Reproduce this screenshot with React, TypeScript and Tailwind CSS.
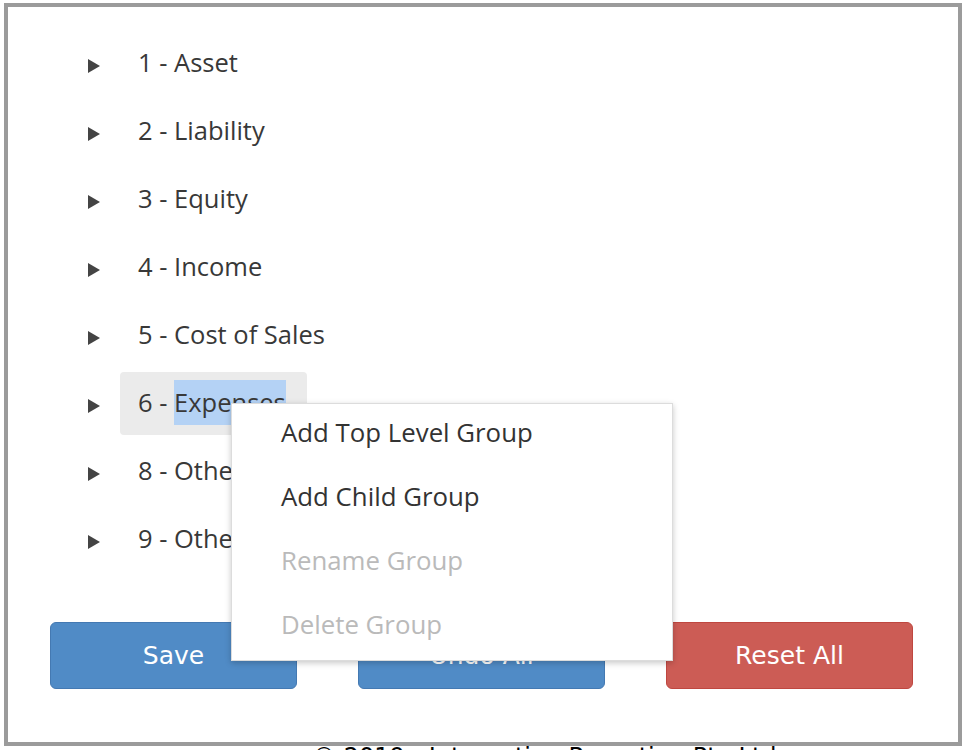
import React from 'react';

const groups = [
  { id: 1, label: '1 - Asset' },
  { id: 2, label: '2 - Liability' },
  { id: 3, label: '3 - Equity' },
  { id: 4, label: '4 - Income' },
  { id: 5, label: '5 - Cost of Sales' },
  { id: 6, label: '6 - Expenses', selected: true },
  { id: 8, label: '8 - Other Income' },
  { id: 9, label: '9 - Other Expenses' },
];

const menuItems = [
  { label: 'Add Top Level Group', disabled: false },
  { label: 'Add Child Group', disabled: false },
  { label: 'Rename Group', disabled: true },
  { label: 'Delete Group', disabled: true },
];

function Caret() {
  return (
    <svg width="12" height="14" viewBox="0 0 12 14" className="block">
      <polygon points="0,0 12,7 0,14" fill="#444444" />
    </svg>
  );
}

function TreeRow({ label, selected }: { label: string; selected?: boolean }) {
  const [num, name] = label.split(' - ');
  return (
    <li className="flex items-start h-[63px] mb-[5px]">
      <div className="ml-[80px] mt-[27px] w-[12px]">
        <Caret />
      </div>
      <div
        className={
          selected
            ? 'ml-[20px] pl-[18px] pr-[21px] pt-[8px] pb-[10px] leading-[45px] rounded-[4px] bg-[#ebebeb]'
            : 'ml-[20px] pl-[18px] pr-[21px] pt-[8px] pb-[10px] leading-[45px]'
        }
      >
        {selected ? (
          <>
            {num} - <span className="inline-block leading-[45px] bg-[#b4d2f5]">{name}</span>
          </>
        ) : (
          label
        )}
      </div>
    </li>
  );
}

export default function App() {
  return (
    <div className="bg-white min-h-[750px] pl-[4px] pt-[3px] overflow-hidden">
      <div className="relative w-[958px] h-[743px] border-4 border-[#9b9b9b] bg-white">
        <div className="pt-[25px] pb-px text-[25.5px] text-[#383838] font-['Open_Sans',sans-serif]">
          <ul>
            {groups.map(g => (
              <TreeRow key={g.id} label={g.label} selected={g.selected} />
            ))}
          </ul>
        </div>

        <div className="mt-[45px] pl-[42px] pr-[45px] grid grid-cols-3 gap-[61px] font-['DejaVu_Sans',sans-serif] text-[25px] text-white">
          <button className="h-[67px] rounded-[6px] bg-[#508bc6] border border-[#4479b2]">Save</button>
          <button className="h-[67px] rounded-[6px] bg-[#508bc6] border border-[#4479b2]">Undo All</button>
          <button className="h-[67px] rounded-[6px] bg-[#cc5c55] border border-[#bf4740]">Reset All</button>
        </div>

        {/* context menu */}
        <div className="absolute left-[223px] top-[396px] w-[442px] bg-white border border-[#dcdcdc] shadow-[0_2px_6px_rgba(0,0,0,0.22)] font-['Open_Sans',sans-serif] text-[25.8px]">
          {menuItems.map(item => (
            <div
              key={item.label}
              className={
                item.disabled
                  ? 'h-[64px] pt-[5px] pl-[49px] leading-[46px] text-[#bababa]'
                  : 'h-[64px] pt-[5px] pl-[49px] leading-[46px] text-[#333333]'
              }
            >
              {item.label}
            </div>
          ))}
        </div>
      </div>
      <div className="pl-[308px] text-[24px] leading-[24px] -mt-[1px] text-black font-['DejaVu_Sans',sans-serif] whitespace-nowrap">
        © 2019 - Integration Reporting Pty Ltd
      </div>
    </div>
  );
}
